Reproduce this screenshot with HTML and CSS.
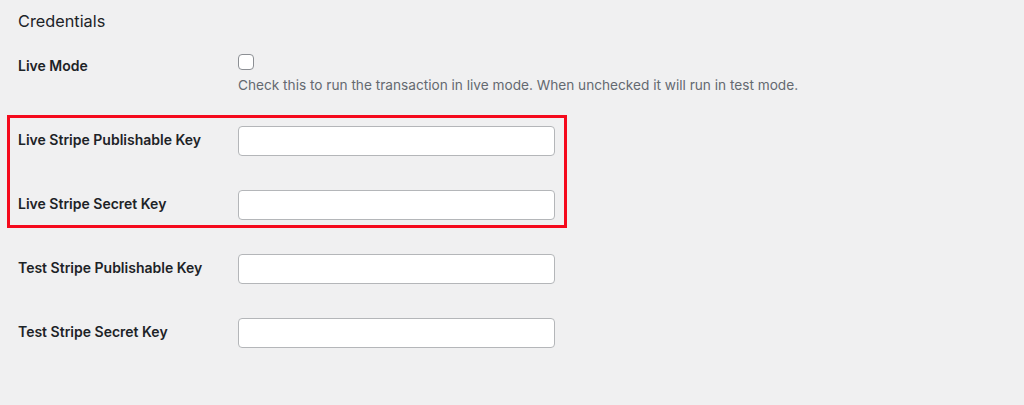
FILE: index.html
```html
<!DOCTYPE html>
<html lang="en">
<head>
<meta charset="utf-8">
<title>Credentials</title>
<link rel="stylesheet" href="styles.css">
</head>
<body>
<div class="page">
  <h2 class="title">Credentials</h2>
  <div class="row row-check">
    <label class="label" for="live">Live Mode</label>
    <div class="field">
      <input type="checkbox" id="live" class="check">
      <p class="desc">Check this to run the transaction in live mode. When unchecked it will run in test mode.</p>
    </div>
  </div>
  <div class="group">
    <div class="row">
      <label class="label" for="lpk">Live Stripe Publishable Key</label>
      <input type="text" id="lpk" class="text">
    </div>
    <div class="row">
      <label class="label" for="lsk">Live Stripe Secret Key</label>
      <input type="text" id="lsk" class="text">
    </div>
  </div>
  <div class="rest">
    <div class="row">
      <label class="label" for="tpk">Test Stripe Publishable Key</label>
      <input type="text" id="tpk" class="text">
    </div>
    <div class="row">
      <label class="label" for="tsk">Test Stripe Secret Key</label>
      <input type="text" id="tsk" class="text">
    </div>
  </div>
</div>
</body>
</html>
```

FILE: styles.css
```css
html, body {
  margin: 0;
  padding: 0;
  background: #f0f0f1;
}

body {
  font-family: Inter, "Liberation Sans", sans-serif;
  color: #1d2327;
  font-size: 14px;
}

.page {
  padding: 0 7px;
}

.title {
  margin: 0;
  padding: 9px 0 0 11px;
  font-size: 16.3px;
  font-weight: 400;
  line-height: 24px;
}

.row {
  display: flex;
  align-items: center;
  height: 30px;
  padding-left: 11px;
}

.row-check {
  align-items: flex-start;
  height: auto;
  margin-top: 21px;
}

.label {
  width: 220px;
  flex: none;
  font-weight: 600;
  line-height: 18px;
  padding-bottom: 2px;
}

.row-check .label {
  padding: 3px 0 0;
}

.field {
  display: flex;
  flex-direction: column;
  align-items: flex-start;
}

.check {
  appearance: none;
  -webkit-appearance: none;
  margin: 0;
  width: 16px;
  height: 16px;
  border: 1px solid #8c8f94;
  border-radius: 4px;
  background: #fff;
  box-sizing: border-box;
}

.desc {
  margin: 5px 0 0;
  color: #646970;
  font-size: 13.65px;
  line-height: 21px;
}

.group {
  width: 560px;
  box-sizing: border-box;
  margin-top: 19px;
  border: 3px solid #f50a1c;
  padding: 8px 0 5px;
  display: flex;
  flex-direction: column;
  gap: 34px;
}

.group .row {
  padding-left: 8px;
}

.rest {
  margin-top: 26px;
  display: flex;
  flex-direction: column;
  gap: 34px;
}

.text {
  margin: 0;
  width: 317px;
  height: 30px;
  box-sizing: border-box;
  border: 1px solid #b4b6b9;
  border-radius: 4px;
  background: #fff;
  padding: 0 8px;
  font: inherit;
}
```
